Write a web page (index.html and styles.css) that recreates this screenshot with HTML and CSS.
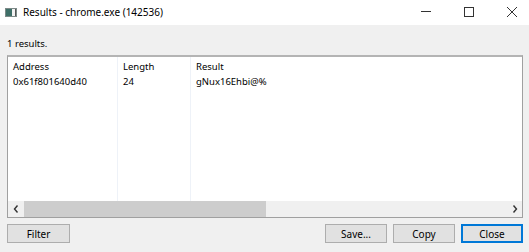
FILE: index.html
```html
<!DOCTYPE html>
<html>
<head>
<meta charset="utf-8">
<link rel="stylesheet" href="styles.css">
</head>
<body>
<div class="window">
  <div class="titlebar">
    <svg class="appicon" width="12" height="9" viewBox="0 0 12 9">
      <rect x="0.5" y="0.5" width="11" height="8" fill="#f2f2f2" stroke="#7d8a88"/>
      <rect x="1" y="1" width="6" height="7" fill="#3e6f68"/>
      <rect x="10" y="1" width="1" height="7" fill="#555"/>
    </svg>
    <span class="title">Results - chrome.exe (142536)</span>
    <div class="controls">
      <span class="ctl min"><svg width="10" height="10" viewBox="0 0 10 10"><line x1="0" y1="4.5" x2="10" y2="4.5" stroke="#333" stroke-width="1"/></svg></span>
      <span class="ctl max"><svg width="10" height="10" viewBox="0 0 10 10"><rect x="0.5" y="0.5" width="9" height="9" fill="none" stroke="#333" stroke-width="1"/></svg></span>
      <span class="ctl cls"><svg width="10" height="10" viewBox="0 0 10 10"><path d="M0 0 L10 10 M10 0 L0 10" stroke="#333" stroke-width="1"/></svg></span>
    </div>
  </div>
  <div class="body">
    <div class="status">1 results.</div>
    <div class="list">
      <div class="grid">
        <div class="col c1"><div class="cell head">Address</div><div class="cell">0x61f801640d40</div></div>
        <div class="col c2"><div class="cell head">Length</div><div class="cell">24</div></div>
        <div class="col c3"><div class="cell head">Result</div><div class="cell">gNux16Ehbi@%</div></div>
      </div>
      <div class="hscroll">
        <span class="arrow"><svg width="6" height="8" viewBox="0 0 6 8"><path d="M4.5 0.5 L1.5 4 L4.5 7.5" fill="none" stroke="#333" stroke-width="1.4"/></svg></span>
        <div class="track"><div class="thumb"></div></div>
        <span class="arrow"><svg width="6" height="8" viewBox="0 0 6 8"><path d="M1.5 0.5 L4.5 4 L1.5 7.5" fill="none" stroke="#333" stroke-width="1.4"/></svg></span>
      </div>
    </div>
    <div class="buttons">
      <button class="btn filter">Filter</button>
      <div class="spacer"></div>
      <button class="btn save">Save...</button>
      <button class="btn copy">Copy</button>
      <button class="btn close default">Close</button>
    </div>
  </div>
</div>
</body>
</html>
```
FILE: styles.css
```css
html, body {
  margin: 0;
  padding: 0;
}
body {
  width: 529px;
  height: 252px;
  overflow: hidden;
  font-family: "Noto Sans", "Open Sans", sans-serif;
  font-size: 9.5px;
  color: #000;
  background: #f0f0f0;
}
.window {
  display: flex;
  flex-direction: column;
  height: 252px;
}
.titlebar {
  height: 25px;
  background: #fff;
  display: flex;
  align-items: center;
  padding-left: 5px;
  box-sizing: border-box;
}
.title {
  margin-left: 6px;
  font-size: 10px;
  color: #000;
  margin-top: -1px;
}
.controls {
  margin-left: auto;
  display: flex;
  align-items: center;
  height: 25px;
}
.ctl {
  width: 10px;
  height: 10px;
  display: flex;
  margin-top: -2px;
}
.min { margin-right: 33px; }
.max { margin-right: 33px; }
.cls { margin-right: 12px; }
.body {
  flex: 1;
  display: flex;
  flex-direction: column;
  padding: 0 6px 10px 7px;
}
.status {
  height: 30px;
  display: flex;
  align-items: center;
  padding-top: 7px;
  box-sizing: border-box;
}
.list {
  height: 163px;
  box-sizing: border-box;
  border: 1px solid #a0a0a0;
  border-top: 2px solid #b4b4b4;
  background: #fff;
  display: flex;
  flex-direction: column;
}
.grid {
  flex: 1;
  display: flex;
}
.col {
  border-right: 1px solid #eef2f8;
}
.c1 { width: 109px; }
.c2 { width: 72px; }
.c3 { flex: 1; border-right: none; }
.cell {
  height: 15px;
  line-height: 15px;
  padding-left: 5px;
  white-space: nowrap;
}
.cell.head { margin-top: 2px; }
.hscroll {
  height: 16px;
  display: flex;
  background: #f0f0f0;
}
.arrow {
  width: 15px;
  display: flex;
  align-items: center;
  justify-content: center;
}
.track {
  flex: 1;
  display: flex;
  padding: 0 1px;
}
.thumb {
  width: 242px;
  background: #cdcdcd;
}
.buttons {
  display: flex;
  margin-top: 6px;
  height: 19px;
  gap: 6px;
}
.spacer { flex: 1; }
.btn {
  font-family: inherit;
  font-size: 10px;
  background: #e1e1e1;
  border: 1px solid #adadad;
  height: 19px;
  padding: 0;
  margin: 0;
  color: #000;
  box-sizing: border-box;
}
.filter { width: 63px; }
.save { width: 62px; }
.copy { width: 62px; }
.close { width: 62px; }
.default {
  border: 1px solid #0078d7;
  box-shadow: inset 0 0 0 1px #0078d7;
}
```
